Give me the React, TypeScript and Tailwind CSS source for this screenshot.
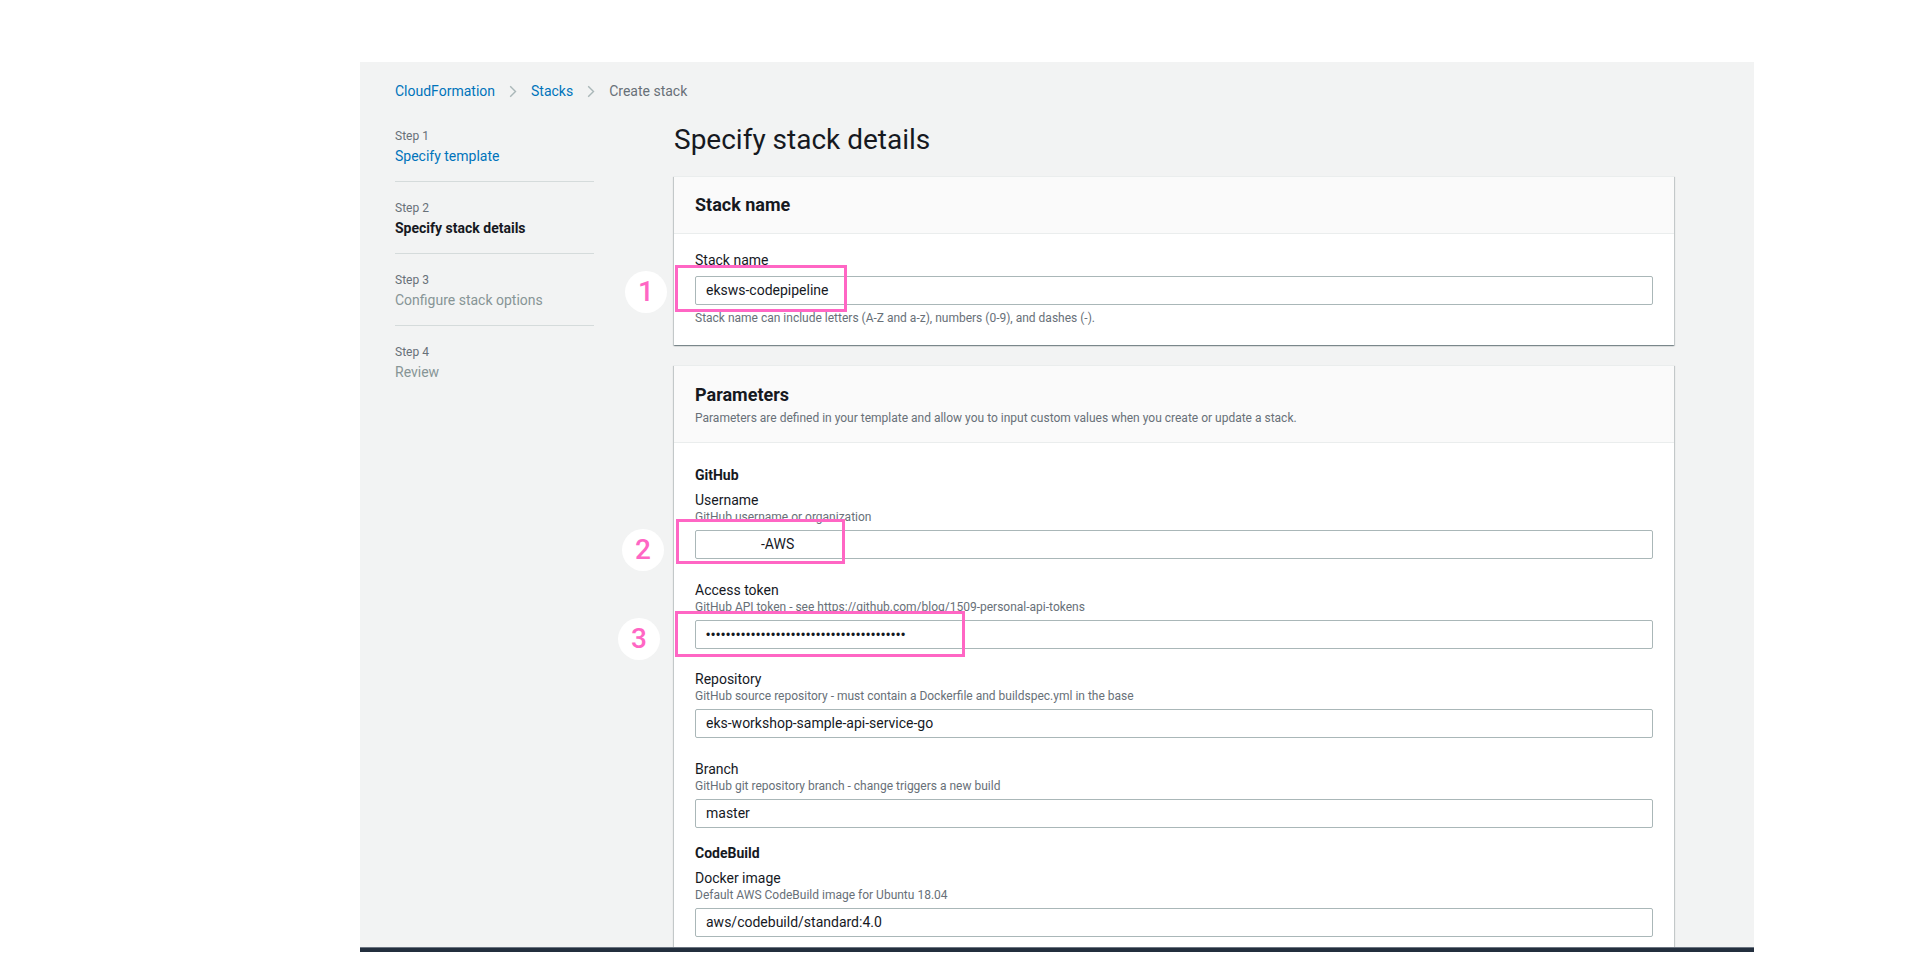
import React from "react";

function Chevron() {
  return (
    <svg width="8" height="13" viewBox="0 0 8 13" className="shrink-0">
      <path d="M1.2 1.2l5.3 5.3-5.3 5.3" stroke="#aab7b8" strokeWidth="1.4" fill="none" />
    </svg>
  );
}

type Ann = { n: string; boxL: number; boxT: number; boxW: number; boxH: number; cL: number; cT: number };

function Annotation({ a }: { a: Ann }) {
  return (
    <>
      <div
        className="absolute border-[3px] border-[#ff66c4] pointer-events-none"
        style={{ left: a.boxL, top: a.boxT, width: a.boxW, height: a.boxH }}
      />
      <div
        className="absolute w-[42px] h-[42px] rounded-full bg-white flex items-center justify-center text-[28px] leading-none font-medium text-[#ff66c4] font-[Roboto,sans-serif]"
        style={{ left: a.cL, top: a.cT }}
      >
        {a.n}
      </div>
    </>
  );
}

function Input({ children, ann }: { children: React.ReactNode; ann?: Ann }) {
  return (
    <div className="relative">
      <div className="h-[29px] border border-[#aab7b8] rounded-[2px] bg-white px-[10px] flex items-center text-[14px] text-[#16191f]">
        {children}
      </div>
      {ann && <Annotation a={ann} />}
    </div>
  );
}

function Field({
  label,
  help,
  children,
  mt,
  ann,
}: {
  label: string;
  help: string;
  children: React.ReactNode;
  mt: string;
  ann?: Ann;
}) {
  return (
    <div className={mt}>
      <div className="text-[14px] leading-[18px] text-[#16191f]">{label}</div>
      <div className="text-[12px] leading-[16px] text-[#687078]">{help}</div>
      <div className="mt-[5px]">
        <Input ann={ann}>{children}</Input>
      </div>
    </div>
  );
}

const steps = [
  { label: "Step 1", title: "Specify template", cls: "text-[#0073bb]" },
  { label: "Step 2", title: "Specify stack details", cls: "text-[#16191f] font-bold" },
  { label: "Step 3", title: "Configure stack options", cls: "text-[#879596]" },
  { label: "Step 4", title: "Review", cls: "text-[#879596]" },
];

const cardShadow =
  "shadow-[0_1px_1px_0_rgba(0,28,36,0.3),1px_1px_1px_0_rgba(0,28,36,0.15),-1px_1px_1px_0_rgba(0,28,36,0.15)] border-t border-[#eaeded]";

export default function App() {
  const dots = "•".repeat(40);
  return (
    <div className="min-h-[969px] w-[1920px] bg-white font-[Roboto,sans-serif]">
      <div className="pt-[62px] pl-[360px]">
        <div className="w-[1394px] h-[885px] overflow-hidden bg-[#f2f3f3] pl-[35px] pt-[19px]">
          {/* breadcrumb */}
          <div className="flex items-center gap-[14px] text-[14px] leading-[20px]">
            <span className="text-[#0073bb]">CloudFormation</span>
            <Chevron />
            <span className="text-[#0073bb]">Stacks</span>
            <Chevron />
            <span className="text-[#687078]">Create stack</span>
          </div>

          <div className="flex mt-[23px] gap-[80px]">
            {/* sidebar */}
            <div className="w-[199px] pt-[4px] shrink-0">
              {steps.map((s, i) => (
                <div
                  key={s.label}
                  className={`${i > 0 ? "pt-[18px]" : ""} pb-[15px] ${i < 3 ? "border-b border-[#d5dbdb]" : ""}`}
                >
                  <div className="text-[12px] leading-[16px] text-[#687078]">{s.label}</div>
                  <div className={`mt-[2px] text-[14px] leading-[20px] ${s.cls}`}>{s.title}</div>
                </div>
              ))}
            </div>

            {/* main */}
            <div className="w-[1000px] shrink-0">
              <h1 className="text-[28px] leading-[32px] text-[#16191f] font-normal">Specify stack details</h1>

              {/* Stack name card */}
              <div className={`mt-[20px] bg-white ${cardShadow}`}>
                <div className="bg-[#fafafa] border-b border-[#eaeded] px-[21px] pt-[17px] pb-[17px]">
                  <div className="text-[18px] leading-[22px] font-bold text-[#16191f]">Stack name</div>
                </div>
                <div className="px-[21px] pt-[17px] pb-[19px]">
                  <div className="text-[14px] leading-[18px] text-[#16191f]">Stack name</div>
                  <div className="mt-[7px]">
                    <Input ann={{ n: "1", boxL: -20, boxT: -11, boxW: 172, boxH: 47, cL: -70, cT: -5 }}>
                      eksws-codepipeline
                    </Input>
                  </div>
                  <div className="mt-[5px] text-[12px] leading-[16px] text-[#687078]">
                    Stack name can include letters (A-Z and a-z), numbers (0-9), and dashes (-).
                  </div>
                </div>
              </div>

              {/* Parameters card */}
              <div className={`mt-[20px] bg-white ${cardShadow}`}>
                <div className="bg-[#fafafa] border-b border-[#eaeded] px-[21px] pt-[18px] pb-[16px]">
                  <div className="text-[18px] leading-[22px] font-bold text-[#16191f]">Parameters</div>
                  <div className="mt-[4px] text-[12px] leading-[16px] text-[#687078]">
                    Parameters are defined in your template and allow you to input custom values when you create or update a stack.
                  </div>
                </div>
                <div className="px-[21px] pt-[22px] pb-[40px]">
                  <div className="text-[14px] leading-[20px] font-bold text-[#16191f]">GitHub</div>
                  <Field
                    mt="mt-[6px]"
                    label="Username"
                    help="GitHub username or organization"
                    ann={{ n: "2", boxL: -19, boxT: -11, boxW: 169, boxH: 45, cL: -73, cT: -1 }}
                  >
                    <span className="pl-[55px]">-AWS</span>
                  </Field>
                  <Field
                    mt="mt-[22px]"
                    label="Access token"
                    help="GitHub API token - see https://github.com/blog/1509-personal-api-tokens"
                    ann={{ n: "3", boxL: -20, boxT: -9, boxW: 290, boxH: 46, cL: -77, cT: -2 }}
                  >
                    <span className="text-[12px] tracking-[0.8px] font-['Liberation_Sans',sans-serif]">{dots}</span>
                  </Field>
                  <Field
                    mt="mt-[21px]"
                    label="Repository"
                    help="GitHub source repository - must contain a Dockerfile and buildspec.yml in the base"
                  >
                    eks-workshop-sample-api-service-go
                  </Field>
                  <Field mt="mt-[22px]" label="Branch" help="GitHub git repository branch - change triggers a new build">
                    master
                  </Field>
                  <div className="mt-[15px] text-[14px] leading-[20px] font-bold text-[#16191f]">CodeBuild</div>
                  <Field mt="mt-[6px]" label="Docker image" help="Default AWS CodeBuild image for Ubuntu 18.04">
                    aws/codebuild/standard:4.0
                  </Field>
                </div>
              </div>
            </div>
          </div>
        </div>
        <div className="w-[1394px] h-[5px] bg-[#232f3e] border-t border-[#6b7480]" />
      </div>
    </div>
  );
}
